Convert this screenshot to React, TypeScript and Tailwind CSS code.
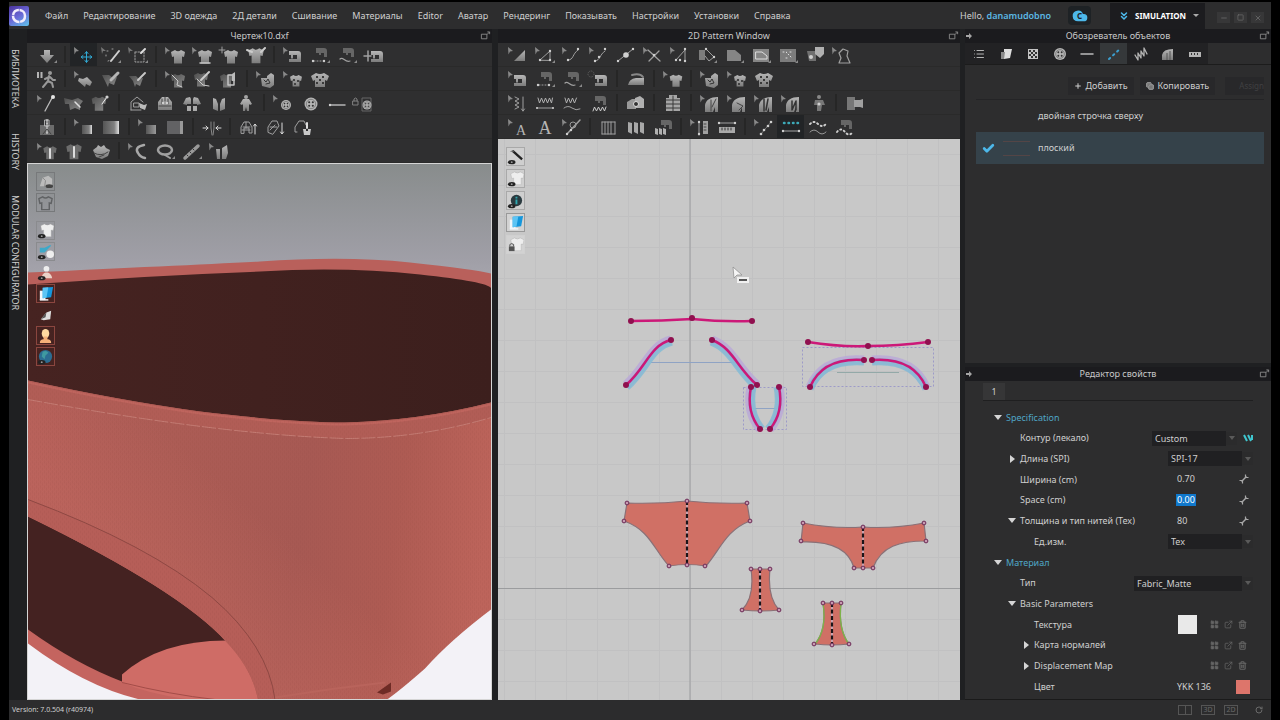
import { useState, type ReactNode } from "react";
import { Check, ChevronsDown, Cloud, Copy, ExternalLink, LayoutGrid, List, Minus, Plus, RotateCw, Square, Trash2, X } from "lucide-react";
import clsx from "clsx";

type IconName = string;

const MENU = [
  "Файл", "Редактирование", "3D одежда", "2Д детали", "Сшивание", "Материалы", "Editor",
  "Аватар", "Рендеринг", "Показывать", "Настройки", "Установки", "Справка",
];

// Toolbar layout: rows of groups, a separator is drawn between two groups.
// A trailing * puts the small cursor arrow in front of the glyph.
const TOOLS_3D: IconName[][][] = [
  [["simulate"], ["move*", "selectPen", "selectBox"], ["shirt*", "shirtLow*", "shirtPlus", "shirtArms"], ["machine*", "segSew", "freeSew", "machineFlip"]],
  [["walk"], ["fold*", "foldPen", "foldBrush"], ["tear*", "tearPen", "tearBox"], ["texture*", "print*", "printShirt"]],
  [["pin*", "pinShirt", "pinBox"], ["house", "jacket", "openShirt", "vest", "avatar"], ["button*", "buttonBig", "buttonhole", "lockButton"]],
  [["zipper"], ["roll*", "rollBig"], ["flat*", "flatBig"], ["squeeze"], ["puffUp", "puffDown", "puffBox"]],
  [["zipShirt*", "zipShirtBig", "bra"], ["tape*", "ring", "ruler", "gloves*"]],
];

const TOOLS_2D: IconName[][][] = [
  [["triangle*", "polyPts*", "curve*", "curvePt*", "addPt", "cross*", "trace*", "polyFold", "polygon", "polyFrame", "polyDash", "heart", "silhouette*"]],
  [["machine*", "segSew", "freeSew", "machineDot"], ["iron"], ["shirtSmall*"], ["texture*", "print*", "printShirt"]],
  [["zigV*", "zig", "zigCurve", "zigSew"], ["duplicate"], ["puffer"], ["pleat*", "pleat2*", "pleat3*", "pleat4*", "pleatPin"], ["camera"]],
  [["letter*", "letterBig", "note*"], ["stripes", "folds", "foldSew"], ["measureV*", "measureH"], ["stitch*", "stitchSeg", "stitchFree", "stitchSew"]],
];

const SHIRT = "M-3-7q3 2.500 6 0l4 2-1 5-2-0.500v7h-8v-7l-2 0.500-1-5z";
const MACHINE = "M-6-6h9q3 0 3 3v8h-12v-3h8v-4h-4v3.500h-2v-3.500h-2z";

function At({ x, y, s = 1, children }: { x: number; y: number; s?: number; children: ReactNode }) {
  return <g transform={`translate(${x} ${y}) scale(${s})`}>{children}</g>;
}

const Shirt = ({ x = 15, y = 14, s = 1, fill = "url(#metal)" }: { x?: number; y?: number; s?: number; fill?: string }) => (
  <At x={x} y={y} s={s}><path d={SHIRT} fill={fill} /></At>
);
const Machine = ({ x = 16, y = 14, s = 1, fill = "url(#metal)" }: { x?: number; y?: number; s?: number; fill?: string }) => (
  <At x={x} y={y} s={s}><path d={MACHINE} fill={fill} /></At>
);
// small, dim machine head above a seam line
const MiniMachine = ({ x = 15 }: { x?: number }) => <path d={`M${x - 5} 5h8q3 0 3 3v6h-3v-4h-3v2h-2v-2h-3z`} fill="#666" />;
const Line = ({ d, w = 1, c = "#a0a0a0", dash }: { d: string; w?: number; c?: string; dash?: string }) => (
  <path d={d} fill="none" stroke={c} strokeWidth={w} strokeDasharray={dash} strokeLinecap="round" strokeLinejoin="round" />
);
const Dots = ({ pts, r = 1.2 }: { pts: number[][]; r?: number }) => (
  <>{pts.map(([x, y]) => <circle key={`${x}-${y}`} cx={x} cy={y} r={r} fill="#d0d0d0" />)}</>
);
const Corner = () => <path d="M24 20v-3l-3 3z" fill="#8a8a8a" />;
const Btn = ({ x, y, r }: { x: number; y: number; r: number }) => (
  <g>
    <circle cx={x} cy={y} r={r} fill="#b4b4b4" />
    <circle cx={x} cy={y} r={r * 0.72} fill="none" stroke="#6b6b6b" strokeWidth="0.7" />
    {[[-1, -1], [1, -1], [-1, 1], [1, 1]].map(([a, b]) => (
      <circle key={`${a}${b}`} cx={x + a * r * 0.28} cy={y + b * r * 0.28} r={r * 0.16} fill="#333" />
    ))}
  </g>
);

const pleatBase = <path d="M9 21v-7c1-5 5-8 13-8v15h-3v-5l-2 5z" fill="url(#metal)" />;

const GLYPHS: Record<string, ReactNode> = {
  simulate: <><path d="M11 7h6v5h4l-7 8-7-8h4z" fill="url(#metal)" /><Corner /></>,
  move: <Line d="M16.500 9v10M11.500 14h10M15 10.500l1.500-2 1.500 2M15 17.500l1.500 2 1.500-2M13 12.500l-2 1.500 2 1.500M20 12.500l2 1.500-2 1.500" c="#31a9d4" />,
  selectPen: <><path d="M4 4l5 4-3 0-1 3z" fill="#777" /><Line d="M10 8h2M15 6h2M9 12v3M11 18l3-1" dash="1 2" /><Line d="M14 18L22 8" w={2} c="#d0d0d0" /><Corner /></>,
  selectBox: <><path d="M4 4l5 4-3 0-1 3z" fill="#777" /><Line d="M11 9h9v10h-9z" dash="1.500 1.500" /><Line d="M17 10l4-4" w={2} c="#ddd" /><Corner /></>,
  shirt: <Shirt x={17} />,
  shirtLow: <><Shirt x={17} /><Line d="M12 20h10" w={1.500} c="#c8c8c8" /></>,
  shirtPlus: <><Shirt x={16} /><Line d="M7 4v6M4 7h6" /></>,
  shirtArms: <><Shirt x={14} y={13} s={1.1} /><Line d="M5 7l5 2M23 5l-4 4" w={2} c="#ccc" /></>,
  machine: <Machine />,
  segSew: <><MiniMachine /><Line d="M8 18h11" dash="1 2" /><Dots pts={[[7, 18], [18, 18]]} /><Corner /></>,
  freeSew: <><MiniMachine /><Line d="M7 16c3-3 5 4 10 2" w={1.200} /><Corner /></>,
  machineFlip: <><Machine x={17} y={14} /><Line d="M4 13h7M8 8v10" w={1.500} /></>,
  machineDot: <><Machine /><circle cx="6" cy="7" r="3" fill="none" stroke="#666" strokeDasharray="1 1" /></>,
  walk: <><path d="M4 5h2v6H4zM7.500 5h2v6h-2z" fill="#b5b5b5" /><circle cx="17" cy="6" r="2" fill="#999" /><Line d="M16 9l-1 5 4 2 1 4M15 14l-5 6M16 10l-4 2M17 10l3 3 2 0" w={2} c="#999" /></>,
  fold: <path d="M9 11l4 1 4-2 5 5-2 4-4-2-1 3-7-6z" fill="url(#metal)" />,
  foldPen: <><path d="M5 8l7 0 4 3 4-1-3 8-5-2-1 4-3-6z" fill="url(#metalDark)" /><Line d="M14 13l7-7" w={3} c="#b5b5b5" /></>,
  foldBrush: <><path d="M5 9l7 0 3 3 4-1-3 8-4-2-1 3-2-6z" fill="url(#metalDark)" /><Line d="M14 13l7-7" w={2} c="#c8c8c8" /></>,
  tear: <><Shirt x={17} y={14} fill="url(#metalDark)" /><Line d="M11 8l6 6-1 4 5 2" c="#ccc" /></>,
  tearPen: <><Shirt x={13} y={13} fill="url(#metalDark)" /><Line d="M13 13l8-8" w={2} c="#ccc" /><Line d="M9 12l6 6 6 1" c="#ccc" /></>,
  tearBox: <><Shirt x={12} y={14} fill="url(#metalDark)" /><Line d="M13 8h6v10h-6z" w={1.500} c="#c4c4c4" /><path d="M17 7l3-2v9h-3z" fill="#bbb" /></>,
  texture: <><path d="M9 11h6v-2l4-3 3 2v10l-4 3-8-2z" fill="url(#metal)" /><Line d="M12 13l2 2 2-3 2 4-4 1" c="#333" /></>,
  print: <><Shirt x={17} y={14} s={0.85} /><path d="M14 12h2v2h-2zM18 13h2v2h-2zM15 16h2v2h-2z" fill="#444" /></>,
  printShirt: <><path d="M10 6q4 2 8 0l5 3-2 5-2-1v7H9v-7l-2 1-2-5z" fill="url(#metal)" /><path d="M10 9h2v2h-2zM16 9h2v2h-2zM13 12h2v2h-2zM10 15h2v2h-2zM16 15h2v2h-2z" fill="#3a3a3a" /></>,
  pin: <><Line d="M12 20l7-13" w={1.300} c="#bbb" /><circle cx="20" cy="6" r="2" fill="#e5e5e5" /></>,
  pinShirt: <><path d="M4 7l8 2 6-2 5 3-3 4v5l-5-2-5 2-1-6-4 0z" fill="url(#metalDark)" /><Line d="M15 11l5 5" w={1.500} c="#ddd" /></>,
  pinBox: <><Shirt x={12} y={13} s={1.05} fill="url(#metalDark)" /><Line d="M15 13l5-7" c="#eee" /><Dots pts={[[20, 6]]} r={1.6} /></>,
  house: <><Line d="M7 19V11l6-5 6 5M7 19h10M10 12h5v4h-5z" /><path d="M15 12l5 2 3-1-2 6-5-2z" fill="#bbb" /></>,
  jacket: <><path d="M7 19v-8l4-5h6l4 5v8z" fill="url(#metal)" /><Line d="M11 8v5M17 8v5M8 15h12M14 6v4" c="#444" /><Dots pts={[[12, 12], [16, 12]]} /></>,
  openShirt: <><path d="M12 6l-4 1-3 6 4 1v-1h4V8zM16 6l4 1 3 6-4 1v-1h-4V8z" fill="url(#metal)" /><path d="M9 15h4v5H9zM15 15h4v5h-4z" fill="#aaa" /></>,
  vest: <><path d="M8 7l3 1 2 5v7l-5-2zM20 7l-3 1-2 5v7l5-2z" fill="url(#metal)" /></>,
  avatar: <><circle cx="14" cy="6" r="2" fill="#a5a5a5" /><path d="M11 8h6l3 5-2 1-1-1v7h-2l-1-4-1 4h-2v-7l-1 1-2-1z" fill="url(#metal)" /></>,
  button: <Btn x={17} y={14} r={5} />,
  buttonBig: <Btn x={15} y={13} r={6.500} />,
  buttonhole: <><Line d="M7 14h15" w={1.500} c="#b5b5b5" /><Dots pts={[[7, 14]]} /></>,
  lockButton: <><Line d="M3 10h5v4H3zM4 10V8q1.500-2 3 0v2" c="#808080" /><path d="M12 7h9v13h-9z" fill="none" stroke="#666" /><Btn x={17} y={14} r={4.500} /></>,
  zipper: <><path d="M7 10h14v10H7z" fill="#6c6c6c" /><Line d="M14 5v15" w={2} c="#bbb" dash="1 2" /><Line d="M12 5h4v6h-4z" c="#b5b5b5" /><Line d="M10 19l4-5 4 5" c="#444" /></>,
  roll: <path d="M12 10h10v9H12z" fill="url(#metalH)" />,
  rollBig: <path d="M6 6h16v13H6z" fill="url(#metalH)" />,
  flat: <path d="M12 10h10v9H12z" fill="url(#metalFlat)" />,
  flatBig: <><path d="M6 6h13v13H6z" fill="#626264" /><path d="M19 6h3v13h-3z" fill="#999" /></>,
  squeeze: <><Line d="M5 13h5M8 11l2 2-2 2M23 13h-5M20 11l-2 2 2 2" c="#d8d8d8" /><Line d="M13 7v6l1 7M16 7v6l-1 7" c="#888" /></>,
  puffUp: <><Line d="M6 18v-6l3-5h5l3 5v6h-3v-5h-5v5zM8 12h7M7 15h8M11 7v6" /><Line d="M20 19v-9M18.500 11l1.500-2 1.500 2" c="#ddd" /></>,
  puffDown: <><Line d="M6 17v-5l4-6h5l2 5-6 8zM8 12h7M8 15l5-5" /><Line d="M20 8v10M18.500 17l1.500 2 1.500-2" c="#ddd" /></>,
  puffBox: <><Line d="M8 17H6v-5l4-6h5l2 4" /><path d="M14 14h3v2h2v-2h3l-1 6h-6z" fill="#c8c8c8" /><Line d="M18 8v5" w={2} c="#ddd" /></>,
  zipShirt: <><Shirt x={17} y={14} s={0.95} fill="#6c6c6c" /><Line d="M17 10v9" w={2} c="#ddd" /></>,
  zipShirtBig: <><Shirt x={14} y={13} s={1.1} fill="#6c6c6c" /><Line d="M14 8v10" w={2} c="#ddd" /></>,
  bra: <><path d="M6 11l4-3 1-2 3 2 3-2 2 3 4 2-2 6-6 3-6-2z" fill="url(#metal)" /><Line d="M7 14q7 4 14-1M12 18l5-2" c="#444" /></>,
  tape: <Line d="M20 6q-10 2-6 8 2 4 7 5" w={2.500} c="#a8a8a8" />,
  ring: <><ellipse cx="14" cy="11" rx="7" ry="4.500" fill="none" stroke="#a0a0a0" strokeWidth="2.500" /><Line d="M14 16l5 3" w={2} /><Corner /></>,
  ruler: <><Line d="M7 19L20 7" w={3.500} c="#999" /><Line d="M9 16l1 1M12 13l1 1M15 10l1 1" c="#333" /><Corner /></>,
  gloves: <><path d="M11 10h4v10h-3zM17 9l5-3 1 8-2 6h-4z" fill="url(#metal)" /></>,
  triangle: <path d="M10 18L21 7v11z" fill="url(#metal)" />,
  polyPts: <><Line d="M9 17L19 8v9z" /><Dots pts={[[9, 17], [19, 8], [19, 17]]} /><Corner /></>,
  curve: <><Line d="M10 17c6 0 4-6 10-10" /><Dots pts={[[10, 17], [20, 6]]} /></>,
  curvePt: <><Line d="M10 18c6-1 4-6 10-10" /><Dots pts={[[10, 18], [14, 14], [20, 6]]} /></>,
  addPt: <><Line d="M6 18L21 6" /><Dots pts={[[6, 18], [21, 6]]} /><Dots pts={[[14, 12]]} r={2.8} /></>,
  cross: <><Line d="M9 7l12 11M10 18l10-10" w={1.300} /><Dots pts={[[15, 12]]} /></>,
  trace: <><Line d="M10 17l9-10v11" /><Dots pts={[[19, 6], [10, 17], [19, 18], [14, 17]]} /></>,
  polyFold: <><path d="M6 7h6v10H6z" fill="#7c7c7c" /><Line d="M13 6l8 8-5 4-4-5" /><Dots pts={[[13, 6], [21, 14]]} /><Corner /></>,
  polygon: <><path d="M7 7h8l6 5v6H7z" fill="#858585" /><Corner /></>,
  polyFrame: <><path d="M6 6h16v13H6z" fill="#858585" /><Line d="M9 9h6l5 4v3H9z" c="#ddd" /><Corner /></>,
  polyDash: <><path d="M6 6h16v13H6z" fill="#7c7c7c" /><Line d="M9 9h3l6 6M12 15h1M16 9h3" c="#ddd" dash="1 2" /><Corner /></>,
  heart: <><path d="M6 8h9v10H8z" fill="#707070" /><path d="M14 4h9v7l-4 4-5-4z" fill="#b0b0b0" /><Dots pts={[[10, 14]]} r={2} /></>,
  silhouette: <Line d="M11 20l2-5-2-5 4-4 5 2-1 5 3 7z" w={1.200} />,
  iron: <><path d="M6 18q1-6 8-7h8v7z" fill="url(#metal)" /><Line d="M10 8q8-2 11 2" w={2} c="#888" /></>,
  shirtSmall: <Shirt x={17} y={14} s={0.9} />,
  zigV: <><Line d="M11 6l4 2-4 2 4 2-4 2 4 2-4 2" /><Line d="M19 6v14M17.500 18l1.500 2 1.500-2" /></>,
  zig: <><Line d="M7 7l1.500 5 2-5 2 5 2-5 2 5 2-5 2 5 1-5" c="#b0b0b0" /><Line d="M6 17h16" /><Dots pts={[[6, 17], [22, 17]]} r={1} /></>,
  zigCurve: <><Line d="M7 7l1.500 5 2-5 2 5 2-5 2 5 2-5" c="#b0b0b0" /><Line d="M6 17q4-3 8 0t8 1" /></>,
  zigSew: <><MiniMachine /><Line d="M8 20l1.500-4 2 4 2-4 2 4 2-4 2 4 1.500-4" c="#ccc" /></>,
  duplicate: <><path d="M5 11l5-3h4v10H5z" fill="#999" /><path d="M13 7l5-2 4 3v9h-9z" fill="#b0b0b0" /><circle cx="14" cy="13" r="2.500" fill="#333" stroke="#ddd" /></>,
  puffer: <><path d="M10 4h8v3h3v13H7V7h3z" fill="#a5a5a5" /><Line d="M7 9h14M7 13h14M7 17h14M14 5v15" c="#3a3a3a" /></>,
  pleat: <>{pleatBase}<Line d="M15 9v11M20 8l-4 8" c="#444" /></>,
  pleat2: <>{pleatBase}<Line d="M14 12l6 3-4 4" c="#444" /></>,
  pleat3: <>{pleatBase}<Line d="M14 8v12M18 8l-2 11" c="#333" w={1.500} /></>,
  pleat4: <>{pleatBase}<Line d="M15 10v9l4-9v9" c="#333" w={1.500} /></>,
  pleatPin: <><circle cx="15" cy="6" r="2" fill="#888" /><path d="M11 9h8l2 5h-3l-1 6h-4v-6h-3z" fill="#777" /><Dots pts={[[15, 13]]} r={1.6} /></>,
  camera: <><path d="M6 6h8v13H6z" fill="#777" /><path d="M13 9h6l3-1v9l-3-1h-6z" fill="#a0a0a0" /></>,
  letter: <text x="17" y="20" textAnchor="middle" className="font-['Liberation_Serif',serif]" fontSize="14" fill="#b5b5b5">A</text>,
  letterBig: <text x="14" y="19" textAnchor="middle" className="font-['Liberation_Serif',serif]" fontSize="18" fill="#b5b5b5">A</text>,
  note: <><Line d="M9 19L22 5" w={1.500} /><circle cx="15" cy="10" r="3" fill="none" stroke="#999" /><Dots pts={[[9, 19], [13, 15]]} /></>,
  stripes: <Line d="M7 7v12M10 7v12M13 7v12M16 7v12M20 7v12M7 7h13M7 19h13" />,
  folds: <path d="M6 7l4 1v11l-4-2zM12 7l4 1v11l-4-2zM18 7l4 1v11l-4-2z" fill="#a8a8a8" />,
  foldSew: <><MiniMachine x={17} /><path d="M6 13l3 1v6l-3-1zM10 13l3 1v6l-3-1zM14 13l3 1v6l-3-1z" fill="#b0b0b0" /></>,
  measureV: <><Line d="M13 7v13" /><Dots pts={[[13, 7], [13, 19]]} /><path d="M17 6h5v13h-5z" fill="#a0a0a0" /><Line d="M18 9h2M18 12h2M18 15h2" c="#444" /></>,
  measureH: <><Line d="M6 8h16" /><Dots pts={[[6, 8], [22, 8]]} /><path d="M6 12h16v6H6z" fill="#aaa" /><Line d="M9 13v2M12 13v2M15 13v2M18 13v2" c="#333" /></>,
  stitch: <><Line d="M11 19l10-12" c="#777" /><Dots pts={[[11, 19], [14, 15], [18, 11], [21, 7]]} r={1.3} /></>,
  stitchSeg: <><Line d="M7 8h14" w={2.500} c="#3da9b8" dash="0.500 4" /><Line d="M6 16h16" c="#a5a5a5" /><Dots pts={[[6, 16], [22, 16]]} /></>,
  stitchFree: <><Line d="M6 9q4-4 8 0t8 0" w={2} c="#ccc" dash="1 3" /><Line d="M6 17q4-4 8 0t8 0" c="#999" /></>,
  stitchSew: <><MiniMachine /><Line d="M6 17q4-5 8 0t8 0" w={2} c="#ccc" dash="1 3" /></>,
};

function Defs() {
  return (
    <svg className="absolute h-0 w-0" aria-hidden="true">
      <defs>
        <linearGradient id="metal" x1="0" x2="0" y1="0" y2="1"><stop offset="0" stopColor="#b6b6b6" /><stop offset="1" stopColor="#7c7c7c" /></linearGradient>
        <linearGradient id="metalDark" x1="0" x2="1" y1="0" y2="1"><stop offset="0" stopColor="#4e4e4e" /><stop offset="1" stopColor="#8a8a8a" /></linearGradient>
        <linearGradient id="metalH"><stop offset="0" stopColor="#555" /><stop offset="0.7" stopColor="#808080" /><stop offset="1" stopColor="#e0e0e0" /></linearGradient>
        <linearGradient id="metalFlat"><stop offset="0" stopColor="#555" /><stop offset="1" stopColor="#999" /></linearGradient>
      </defs>
    </svg>
  );
}

function ToolRow({ groups, active }: { groups: IconName[][]; active: string }) {
  return (
    <div className="flex h-6 shrink-0 border-b border-[#2a2a2a] pl-[6px]">
      {groups.map((group, i) => (
        <div key={i} className="flex">
          {i > 0 && <div className="mx-1 my-[3px] w-[2px] bg-[#262626]" />}
          {group.map((raw) => {
            const name = raw.replace("*", "");
            return (
              <button key={raw} aria-label={name} className={clsx("h-[23px] w-[27px]", name === active && "bg-[#222426]")}>
                <svg viewBox="0 0 27 24" className="h-6 w-[27px]">
                  {raw.endsWith("*") && <path d="M4 4l5 4-3 0.500-1.500 3z" fill="#8a8a8a" />}
                  {GLYPHS[name]}
                </svg>
              </button>
            );
          })}
        </div>
      ))}
    </div>
  );
}

function PanelTitle({ title, arrow }: { title: string; arrow?: boolean }) {
  return (
    <div className="flex h-[14px] shrink-0 items-center bg-[#1b1b1e] text-[#c8c8c8]">
      <span className="w-3">
        {arrow && <svg viewBox="0 0 8 8" className="h-2 w-2" fill="#a5a5a5"><path d="M1 3h3V1l3 3-3 3V5H1z" /></svg>}
      </span>
      <h2 className="flex-1 text-center text-[9px] leading-[14px]">{title}</h2>
      <button aria-label="Undock" className="w-3">
        <svg viewBox="0 0 12 12" className="h-[11px] w-[11px]" fill="none" stroke="#8a8a8a"><path d="M1.500 3.500h6v5h-6zM7.500 4l3-3M8 1h2.500v2.500" /></svg>
      </button>
    </div>
  );
}

function MenuBar() {
  return (
    <header className="flex h-[27px] shrink-0 items-center bg-[#2d2d2e] pr-[7px]">
      <svg viewBox="0 0 20 20" className="h-5 w-5" aria-label="Logo">
        <defs><linearGradient id="logo" x1="0.200" x2="0.800" y1="0" y2="1"><stop offset="0" stopColor="#4f3aa6" /><stop offset="0.5" stopColor="#6a68d6" /><stop offset="1" stopColor="#62b8e8" /></linearGradient></defs>
        <rect width="20" height="20" rx="2" fill="url(#logo)" />
        <circle cx="10" cy="10" r="6" fill="none" stroke="#f1ecfb" strokeWidth="2.500" strokeDasharray="8 0.700 10 0.700" />
      </svg>
      <nav className="ml-4 flex gap-[15px]">
        {MENU.map((item) => <button key={item} className="whitespace-nowrap text-[9px] leading-4">{item}</button>)}
      </nav>
      <div className="ml-auto flex h-full items-center">
        <span className="text-[9px] leading-4">Hello, <b className="font-semibold text-[#5cb9e4]">danamudobno</b></span>
        <button aria-label="Cloud" className="relative ml-[17px] flex h-[19px] w-[23px] items-center justify-center rounded bg-[#1e2225]">
          <Cloud className="h-4 w-4 fill-[#4db8ea] text-[#4db8ea]" />
          <span className="absolute inset-x-0 top-1 text-center text-[8px] font-bold leading-3 text-[#1e2225]">C</span>
        </button>
        <button className="ml-[19px] flex h-[26px] w-[95px] items-center bg-[#1c1c1f] pl-2 text-[8px] font-bold leading-4 text-white">
          <ChevronsDown className="mr-[5px] h-3 w-3 text-[#4db8ea]" strokeWidth={3} />
          SIMULATION
          <span className="ml-auto mr-[6px] border-x-[3px] border-t-[3px] border-x-transparent border-t-[#aaa]" />
        </button>
        <div className="ml-3 mt-1 flex gap-1 text-[#777]">
          <button aria-label="Minimize" className="flex h-[11px] w-[13px] items-center justify-center bg-[#373738]"><Minus size={8} /></button>
          <button aria-label="Maximize" className="flex h-[11px] w-[13px] items-center justify-center bg-[#373738]"><Square size={7} /></button>
          <button aria-label="Close" className="flex h-[11px] w-[13px] items-center justify-center bg-[#373738]"><X size={8} /></button>
        </div>
      </div>
    </header>
  );
}

const WhiteShirt = () => <At x={11} y={9}><path d={SHIRT} fill="#eee" stroke="#aaa" strokeWidth="0.400" /></At>;
const Eye = () => <><ellipse cx="5" cy="15" rx="4" ry="2.200" fill="#222" /><circle cx="5" cy="15" r="1" fill="#999" /></>;
const BlueSheet = () => <><path d="M3 6h6v10H3z" fill="#f2f6fa" /><path d="M3 15h9v1.500H3z" fill="#f2f6fa" /><path d="M6 3l11-1-2 11-9 1z" fill="#1597dc" /><path d="M6 3l6-0.500-2 11-4 0.500z" fill="#5cc4f4" /></>;

const VIEW_3D: { name: string; frame: string; art: ReactNode }[] = [
  { name: "Surface", frame: "border-[#77797b]", art: <><path d="M3 14l3-9 6-2 4 3v8z" fill="#bbb" /><path d="M6 5l3 3-1 7" stroke="#888" fill="none" /><ellipse cx="13" cy="14" rx="4" ry="2" fill="#444" /></> },
  { name: "Mesh", frame: "border-[#77797b]", art: <At x={9} y={10}><path d={SHIRT} fill="none" stroke="#606264" strokeWidth="1.500" /></At> },
  { name: "Garment", frame: "mt-[7px] border-[#8a8b8e]", art: <><WhiteShirt /><Eye /></> },
  { name: "Trims", frame: "border-[#8a8b8e]", art: <><path d="M3 5h5l6-3 1 1-7 7-5 0z" fill="#3fa9c9" /><circle cx="14" cy="12" r="4" fill="#eee" /><Eye /></> },
  { name: "Avatar", frame: "border-transparent", art: <><circle cx="10" cy="5" r="3" fill="#eee" /><path d="M5 15c0-8 10-8 11 0z" fill="#ead2c8" /><Eye /></> },
  { name: "Fabric", frame: "border-[#8b463f]", art: <BlueSheet /> },
  { name: "Thickness", frame: "border-transparent", art: <><path d="M4 14l6-7 5-2-1 9-7 1z" fill="#ddd" /><path d="M4 14l6-7-1 5z" fill="#555" /></> },
  { name: "Skin", frame: "border-[#8b463f]", art: <><ellipse cx="9" cy="7" rx="4" ry="5" fill="#ffd9a0" /><path d="M3 17q0-4 4-4v-3h4v3q4 0 4 4z" fill="#f5b078" /></> },
  { name: "World", frame: "border-[#8b463f]", art: <><circle cx="9" cy="9" r="7" fill="#2c6d92" /><path d="M6 4q4-2 6 1l-3 3-1 4-3-3z" fill="#3f9aa0" /><Eye /></> },
];

const VIEW_2D: { name: string; frame: string; art: ReactNode }[] = [
  { name: "Needle", frame: "border-[#a9a9a9] bg-[#cfcfcf]", art: <><path d="M6 3l10 9" stroke="#222" strokeWidth="2.500" /><path d="M3 4l3-2 2 2z" fill="#6a6a6a" /><Eye /></> },
  { name: "Shirt", frame: "border-[#a9a9a9] bg-[#cfcfcf]", art: <><WhiteShirt /><Eye /></> },
  { name: "Info", frame: "border-[#a9a9a9] bg-[#cfcfcf]", art: <><circle cx="10" cy="9" r="6" fill="#2b3b40" /><path d="M9 8h2v5H9zM9 5h2v2H9z" fill="#2ea8b0" /><Eye /></> },
  { name: "Fabric", frame: "border-[#999] bg-[#d2d2d2]", art: <BlueSheet /> },
  { name: "Lock", frame: "border-[#d0d0d0] bg-[#d2d2d2]", art: <><WhiteShirt /><path d="M2 11h6v5H2z" fill="#555" /><path d="M3 11V9q2-2 4 0v2" fill="none" stroke="#555" /></> },
];

function ViewButtons({ items, gap }: { items: typeof VIEW_3D; gap: string }) {
  return (
    <div className={clsx("absolute left-2 top-2 flex flex-col", gap)}>
      {items.map((b) => (
        <button key={b.name} aria-label={b.name} className={clsx("h-[19px] w-[19px] border", b.frame)}>
          <svg viewBox="0 0 18 18" className="h-[17px] w-[17px]">{b.art}</svg>
        </button>
      ))}
    </div>
  );
}

const BODY = "M28 380Q120 400 200 411Q290 422 345 422Q420 420 491 402V609Q450 640 425 668Q400 690 387 699H258Q252 668 226 641Q180 590 28 516z";

function GarmentView() {
  return (
    <div className="relative min-h-0 flex-1 border border-[#d5d5d5]">
      <svg viewBox="28 163 463 536" preserveAspectRatio="xMidYMid slice" className="absolute inset-0 h-full w-full">
        <defs>
          <linearGradient id="sky" x1="0" x2="0" y1="0" y2="1">
            <stop offset="0" stopColor="#888c8c" /><stop offset="0.18" stopColor="#a09fa7" /><stop offset="0.6" stopColor="#e6e5ec" /><stop offset="0.85" stopColor="#f3f2f7" />
          </linearGradient>
          <linearGradient id="cloth" x1="0" x2="1" y1="0.300" y2="0.400">
            <stop offset="0" stopColor="#b05d57" /><stop offset="0.3" stopColor="#ac5c55" /><stop offset="0.6" stopColor="#a75953" /><stop offset="0.8" stopColor="#ae5b53" /><stop offset="1" stopColor="#bd645b" />
          </linearGradient>
          <linearGradient id="glow" gradientUnits="userSpaceOnUse" x1="210" y1="470" x2="130" y2="560">
            <stop offset="0" stopColor="#cf6f66" stopOpacity="0" /><stop offset="1" stopColor="#cf6f66" stopOpacity="0.350" />
          </linearGradient>
          <linearGradient id="inside" x1="0" x2="1"><stop offset="0" stopColor="#462321" /><stop offset="1" stopColor="#3c1f1d" /></linearGradient>
          <pattern id="knit" width="4" height="5" patternUnits="userSpaceOnUse"><path d="M0.500 0v3M2.500 2v3" stroke="#8d4540" strokeOpacity="0.100" /></pattern>
        </defs>
        <rect x="28" y="163" width="463" height="536" fill="url(#sky)" />
        <path d="M28 272Q180 265 260 261Q345 255 410 262T491 273V420H28z" fill="#b9605b" />
        <path d="M28 284Q150 275 260 271Q345 266 420 274T491 289V440H28z" fill="url(#inside)" />
        <path d="M28 505H240L275 699H190Q90 690 28 630z" fill="#442221" />
        <path d="M28 629Q75 663 122 681Q155 695 210 699H140Q85 686 28 643z" fill="#c4645f" />
        <path d="M122 682V674Q160 640 226 640H260L275 699H190Q150 694 122 682z" fill="#cf6c66" />
        <path d="M122 682Q170 694 215 699" fill="none" stroke="#a34c48" />
        <path d={BODY} fill="url(#cloth)" />
        <path d={BODY} fill="url(#glow)" />
        <path d="M28 380Q120 400 200 411Q290 422 345 422Q420 420 491 402V417Q420 438 345 438Q220 434 28 399z" fill="#b15d56" />
        <path d="M28 399Q220 434 345 438Q420 438 491 417" fill="none" stroke="#c47c74" strokeDasharray="14 2" />
        <path d="M28 382Q120 402 200 413Q290 424 345 424Q420 422 491 404" fill="none" stroke="#bf655e" strokeWidth="2" />
        <path d="M28 499Q150 545 212 597Q268 645 275 699H258Q252 668 226 641Q180 590 28 516z" fill="#b65e58" />
        <path d={BODY} fill="url(#knit)" />
        <path d="M28 499Q150 545 212 597Q268 645 275 699" fill="none" stroke="#8e4843" />
        <path d="M377 692l14-10v9l-8 3z" fill="#6e2b25" />
        <path d="M275 697Q330 688 385 682" fill="none" stroke="#b9645c" strokeWidth="2" />
      </svg>
      <ViewButtons items={VIEW_3D} gap="gap-[2px]" />
    </div>
  );
}

type Pt = [number, number];

const PIECES: { d: string; fold: string; nodes: Pt[]; edge?: string }[] = [
  { d: "M627 503Q658 504 687 501Q716 504 747 503L750 521C726 530 720 550 706 566Q687 563 669 566C654 550 650 530 624 521z", fold: "M687 501V565", nodes: [[627, 503], [687, 501], [747, 503], [624, 521], [750, 521], [669, 566], [687, 565], [705, 566]] },
  { d: "M803 523Q833 529 863 527Q893 529 924 523L926 541C900 541 881 546 873 568H854C848 546 826 541 801 542z", fold: "M863 527V568", nodes: [[803, 523], [863, 527], [924, 523], [801, 541], [926, 541], [854, 568], [863, 568], [873, 568]] },
  { d: "M751 569H770Q767 597 779 610Q761 612 742 610Q755 597 751 569z", fold: "M760 569V611", nodes: [[751, 569], [760, 569], [770, 569], [742, 610], [760, 611], [779, 610]] },
  { d: "M823 603H841Q838 630 849 644Q832 646 815 644Q827 630 823 603z", fold: "M832 603V645", nodes: [[823, 603], [832, 603], [841, 603], [814, 644], [832, 645], [849, 644]], edge: "M823 603Q827 630 815 644M841 603Q838 630 849 644" },
];

const SEAMS: { d: string; ends: Pt[]; glow?: [number, number] }[] = [
  { d: "M631 321Q662 321 692 319Q722 322 752 321", ends: [[631, 321], [692, 318], [752, 321]] },
  { d: "M808 342Q838 347 868 346Q898 346 928 342", ends: [[808, 342], [868, 346], [928, 342]] },
  { d: "M671 340C650 345 646 368 626 385", ends: [[671, 340], [626, 385]], glow: [1, 2] },
  { d: "M712 340C733 348 737 368 757 385", ends: [[712, 340], [757, 385]], glow: [-1, 2] },
  { d: "M751 387Q746 412 760 429", ends: [[751, 387], [760, 429]], glow: [2, 0] },
  { d: "M779 387Q784 412 770 429", ends: [[779, 387], [770, 429]], glow: [-2, 0] },
  { d: "M864 360C838 358 819 366 810 387", ends: [[864, 360], [810, 387]], glow: [0, 2] },
  { d: "M872 360C898 358 917 366 926 387", ends: [[872, 360], [926, 387]], glow: [0, 2] },
];

function PatternView() {
  return (
    <div className="relative min-h-0 flex-1 bg-[#c8c8c8]">
      <svg viewBox="498 139 462 561" preserveAspectRatio="xMidYMid slice" className="absolute inset-0 h-full w-full">
        <defs>
          <pattern id="grid" x="504" y="154" width="31" height="31" patternUnits="userSpaceOnUse"><path d="M0 0.500h31M0.500 0v31" stroke="#c1c1c2" /></pattern>
        </defs>
        <rect x="498" y="139" width="462" height="561" fill="url(#grid)" />
        <path d="M690 139v561M498 588.500h462" stroke="#9b9c9e" />
        <path d="M651 362.500h84M753 408.500h24" stroke="#8fa3c4" />
        <path d="M837 372.500h62" stroke="#93a9a8" />
        <path d="M743.500 387.500h43v42h-43zM802.500 347.500h131v39h-131z" fill="none" stroke="#9d9ac8" strokeDasharray="2 2" />
        {SEAMS.map((s) => (
          <g key={s.d} fill="none">
            {s.glow && <path d={s.d} stroke="#b9a8d8" strokeWidth="9" strokeOpacity="0.800" />}
            {s.glow && <path d={s.d} stroke="#7fbcd4" strokeWidth="7" strokeOpacity="0.800" transform={`translate(${s.glow[0]} ${s.glow[1]})`} />}
            <path d={s.d} stroke="#cc1878" strokeWidth="2.500" />
            {s.ends.map(([x, y]) => <circle key={`${x}-${y}`} cx={x} cy={y} r="3" fill="#90104f" />)}
          </g>
        ))}
        {PIECES.map((p) => (
          <g key={p.d}>
            <path d={p.d} fill="#d07065" stroke="#8a7076" strokeWidth="1.200" />
            {p.edge && <path d={p.edge} fill="none" stroke="#7fb24a" strokeWidth="1.300" />}
            <path d={p.fold} stroke="#c9a3b0" strokeWidth="2" />
            <path d={p.fold} stroke="#1a1418" strokeWidth="2.200" strokeDasharray="4 2.500" />
            {p.nodes.map(([x, y]) => <circle key={`${x}-${y}`} cx={x} cy={y} r="1.900" fill="#c79ab0" stroke="#6b2a55" />)}
          </g>
        ))}
        <path d="M733 267l1 11 3-3 5 0z" fill="#f5f5f5" stroke="#888" strokeWidth="0.700" />
        <path d="M737 277h12v6h-12z" fill="#f0f0f0" /><path d="M739 280h8" stroke="#555" strokeWidth="2" />
      </svg>
      <ViewButtons items={VIEW_2D} gap="gap-[3px]" />
    </div>
  );
}

const BROWSER_TABS: { name: string; art: ReactNode }[] = [
  { name: "Scene", art: <List className="h-3 w-3 text-[#b5b5b5]" /> },
  { name: "Fabric", art: <svg viewBox="0 0 14 14" className="h-[14px] w-[14px]"><path d="M5 2h8l-2 9-6 1z" fill="#dedede" /><path d="M2 5h4l-1 7H2z" fill="#8a8a8a" /></svg> },
  { name: "Graphic", art: <svg viewBox="0 0 14 14" className="h-[14px] w-[14px]"><rect x="2" y="2" width="10" height="10" fill="#c4c4c4" /><path d="M3 3h2v2H3zM7 3h2v2H7zM5 5h2v2H5zM9 5h2v2H9zM3 7h2v2H3zM7 7h2v2H7zM5 9h2v2H5zM9 9h2v2H9z" fill="#333" /></svg> },
  { name: "Button", art: <svg viewBox="0 0 14 14" className="h-[14px] w-[14px]"><Btn x={7} y={7} r={6} /></svg> },
  { name: "Buttonhole", art: <svg viewBox="0 0 14 14" className="h-[14px] w-[14px]"><Line d="M1 7h12" w={1.500} c="#bbb" /></svg> },
  { name: "Topstitch", art: <svg viewBox="0 0 14 14" className="h-[14px] w-[14px]"><Line d="M2 12L13 2" w={2} c="#3b9fd0" dash="1.500 4" /></svg> },
  { name: "Puckering", art: <svg viewBox="0 0 14 14" className="h-[14px] w-[14px]"><Line d="M1 8l3 5V6l3 5V4l3 5V1l3 6" w={1.300} c="#b5b5b5" /></svg> },
  { name: "Pleats", art: <svg viewBox="0 0 14 14" className="h-[14px] w-[14px]"><path d="M1 13V8q1-6 11-6v11z" fill="url(#metal)" /><path d="M9 4v9M6 6v7" stroke="#555" /></svg> },
  { name: "Measure", art: <svg viewBox="0 0 14 14" className="h-[14px] w-[14px]"><path d="M1 5h12v5H1z" fill="#b5b5b5" /><path d="M3.500 6v2M6.500 6v2M9.500 6v2" stroke="#333" /></svg> },
];

function ObjectBrowser() {
  const [selected, setSelected] = useState("плоский");
  return (
    <section className="flex h-[334px] shrink-0 flex-col">
      <PanelTitle title="Обозреватель объектов" arrow />
      <div className="flex h-[22px] shrink-0 border-b border-[#1c1c1c]">
        {BROWSER_TABS.map((t) => (
          <button key={t.name} aria-label={t.name} className={clsx("flex w-[27px] items-center justify-center", t.name === "Topstitch" ? "bg-[#35383a]" : "bg-[#222224]")}>{t.art}</button>
        ))}
      </div>
      <div className="mt-3 flex h-[18px] shrink-0 justify-end gap-[6px] pr-[7px] text-[9px] leading-[18px]">
        <button className="flex items-center gap-1 bg-[#28282a] px-[6px]"><Plus size={8} strokeWidth={3} />Добавить</button>
        <button className="mr-1 flex items-center gap-1 bg-[#28282a] px-[6px]"><Copy size={8} className="fill-[#777]" />Копировать</button>
        <button disabled className="bg-[#28282a] pl-[14px] text-[8px] text-[#404042]">Assign</button>
      </div>
      <ul className="ml-[11px] mr-[7px] mt-1 border-t border-[#242426] text-[9px]">
        {["двойная строчка сверху", "плоский"].map((name) => (
          <li key={name}>
            <button onClick={() => setSelected(name)} className={clsx("flex h-8 w-full items-center", selected === name && "bg-[#35424a]")}>
              <span className="w-[27px] pl-[6px]">{selected === name && <Check size={13} strokeWidth={5} className="text-[#4db8ea]" />}</span>
              <span className={clsx("mr-2 h-[15px] w-[27px] border-y", selected === name ? "border-[#544546]" : "border-transparent")} />
              {name}
            </button>
          </li>
        ))}
      </ul>
    </section>
  );
}

function Row({ indent, arrow, label, head, htmlFor, children }: { indent: string; arrow?: "open" | "shut"; label: string; head?: boolean; htmlFor?: string; children?: ReactNode }) {
  return (
    <div className={clsx("flex min-h-0 items-center pr-[18px]", indent)}>
      <span className="flex w-3 shrink-0">
        {arrow === "open" && <span className="border-x-[4px] border-t-[5px] border-x-transparent border-t-[#d5d5d5]" />}
        {arrow === "shut" && <span className="ml-[2px] border-y-[4px] border-l-[5px] border-y-transparent border-l-[#d5d5d5]" />}
      </span>
      <label htmlFor={htmlFor} className={clsx("flex-1 whitespace-nowrap", head && "text-[#4fa6c6]")}>{label}</label>
      {children}
    </div>
  );
}

function Pick({ id, value, width, extra }: { id: string; value: string; width: string; extra?: ReactNode }) {
  return (
    <>
      <select id={id} className={clsx("h-[15px] appearance-none bg-[#202022] px-[3px] leading-[15px] outline-none", width)}><option>{value}</option></select>
      <span className="flex h-[13px] w-[11px] items-center justify-center bg-[#2b2b2c]"><span className="border-x-[3px] border-t-[4px] border-x-transparent border-t-[#5a5a5a]" /></span>
      {extra}
    </>
  );
}

function Num({ id, value, marked }: { id: string; value: string; marked?: boolean }) {
  const [text, setText] = useState(value);
  return (
    <>
      <input id={id} value={text} onChange={(e) => setText(e.target.value)} className={clsx("h-3 w-5 px-px leading-3 outline-none", marked ? "bg-[#1078cc] text-white" : "bg-transparent")} />
      <button aria-label="Tune" className="ml-[43px] mr-1">
        <svg viewBox="0 0 10 10" className="h-[10px] w-[10px]" fill="none" stroke="#a8a8a8"><path d="M2.500 7.500l5-5" strokeWidth="1.500" /><path d="M6.500 0.500v3h3M0.500 6.500h3v3" strokeWidth="1.200" /></svg>
      </button>
    </>
  );
}

function MapTools() {
  return (
    <span className="flex gap-[5px] pr-[6px] text-[#666]">
      <button aria-label="Library"><LayoutGrid size={9} className="fill-[#666]" /></button>
      <button aria-label="Open"><ExternalLink size={9} /></button>
      <button aria-label="Delete"><Trash2 size={9} strokeWidth={3} /></button>
    </span>
  );
}

function PropertyEditor() {
  return (
    <section className="flex min-h-0 flex-1 flex-col border-b border-[#1a1a1a]">
      <PanelTitle title="Редактор свойств" arrow />
      <div className="mx-[18px] flex h-5 shrink-0 border-b border-[#1f1f20] pt-[2px]">
        <button className="w-[22px] bg-[#363637] text-[9px]">1</button>
      </div>
      <div className="flex min-h-0 flex-1">
        <div className="grid min-h-0 flex-1 auto-rows-fr pb-[2px] pt-[6px] text-[9px]">
          <Row indent="pl-[29px]" arrow="open" label="Specification" head />
          <Row indent="pl-[43px]" label="Контур (лекало)" htmlFor="outline">
            <Pick id="outline" value="Custom" width="w-[74px]" extra={<span className="flex w-4 justify-end"><svg viewBox="0 0 10 8" className="h-2 w-[10px]"><path d="M1 1l3 6M5 1l3 6M9 1v5" stroke="#3fc6cf" strokeWidth="2" /></svg></span>} />
          </Row>
          <Row indent="pl-[43px]" arrow="shut" label="Длина (SPI)" htmlFor="spi"><Pick id="spi" value="SPI-17" width="w-[74px]" /></Row>
          <Row indent="pl-[43px]" label="Ширина (cm)" htmlFor="width"><Num id="width" value="0.70" /></Row>
          <Row indent="pl-[43px]" label="Space (cm)" htmlFor="space"><Num id="space" value="0.00" marked /></Row>
          <Row indent="pl-[43px]" arrow="open" label="Толщина и тип нитей (Tex)" htmlFor="tex"><Num id="tex" value="80" /></Row>
          <Row indent="pl-[57px]" label="Ед.изм." htmlFor="unit"><Pick id="unit" value="Tex" width="w-[74px]" /></Row>
          <Row indent="pl-[29px]" arrow="open" label="Материал" head />
          <Row indent="pl-[43px]" label="Тип" htmlFor="kind"><Pick id="kind" value="Fabric_Matte" width="w-[108px]" /></Row>
          <Row indent="pl-[43px]" arrow="open" label="Basic Parameters" />
          <Row indent="pl-[57px]" label="Текстура"><span className="mr-[13px] h-[19px] w-[19px] bg-[#e9e9e9]" /><MapTools /></Row>
          <Row indent="pl-[57px]" arrow="shut" label="Карта нормалей"><MapTools /></Row>
          <Row indent="pl-[57px]" arrow="shut" label="Displacement Map"><MapTools /></Row>
          <Row indent="pl-[57px]" label="Цвет">YKK 136<button aria-label="Цвет" className="ml-[25px] mr-[3px] h-[14px] w-[14px] bg-[#dd756b]" /></Row>
        </div>
      </div>
    </section>
  );
}

export default function App() {
  return (
    <div className="flex h-screen flex-col overflow-hidden bg-black px-[9px] pt-[2px] font-['Noto_Sans',sans-serif] text-[#cfcfcf]">
      <Defs />
      <div className="flex min-h-0 flex-1 flex-col bg-[#2c2c2d]">
        <MenuBar />
        <main className="grid min-h-0 flex-1 grid-cols-[18px_471fr_467fr_306px] grid-rows-[minmax(0,1fr)] bg-[#1f2022]">
          <aside className="flex flex-col items-start gap-[25px] pt-5 text-[9px]">
            {["БИБЛИОТЕКА", "HISTORY", "MODULAR CONFIGURATOR"].map((t) => (
              <button key={t} className="w-3 whitespace-nowrap leading-3 [writing-mode:vertical-rl]">{t}</button>
            ))}
          </aside>
          <section className="flex min-w-0 flex-col pr-[6px]">
            <div className="flex flex-col bg-[#2f2f30]">
              <PanelTitle title="Чертеж10.dxf" />
              {TOOLS_3D.map((g, i) => <ToolRow key={i} groups={g} active="move" />)}
            </div>
            <GarmentView />
          </section>
          <section className="flex min-w-0 flex-col pr-[5px]">
            <div className="flex flex-col bg-[#2f2f30]">
              <PanelTitle title="2D Pattern Window" />
              {TOOLS_2D.map((g, i) => <ToolRow key={i} groups={g} active="stitchSeg" />)}
            </div>
            <PatternView />
          </section>
          <div className="flex min-h-0 min-w-0 flex-col gap-1 [&>section]:bg-[#2d2d2e]">
            <ObjectBrowser />
            <PropertyEditor />
          </div>
        </main>
        <footer className="flex h-5 shrink-0 items-center bg-[#2c2c2d] pl-[3px] pr-2 text-[7px]">
          Version: 7.0.504 (r40974)
          <div className="ml-auto flex items-center gap-[9px] text-[#6a6a6a]">
            <button aria-label="Split view" className="flex h-[10px] w-[14px] border border-[#555]"><span className="mx-auto h-full w-px bg-[#555]" /></button>
            <button className="h-[10px] w-[14px] border border-[#555] leading-[8px]">3D</button>
            <button className="h-[10px] w-[14px] border border-[#555] leading-[8px]">2D</button>
            <button aria-label="Reset" className="ml-2"><RotateCw size={8} strokeWidth={3} /></button>
          </div>
        </footer>
      </div>
    </div>
  );
}
